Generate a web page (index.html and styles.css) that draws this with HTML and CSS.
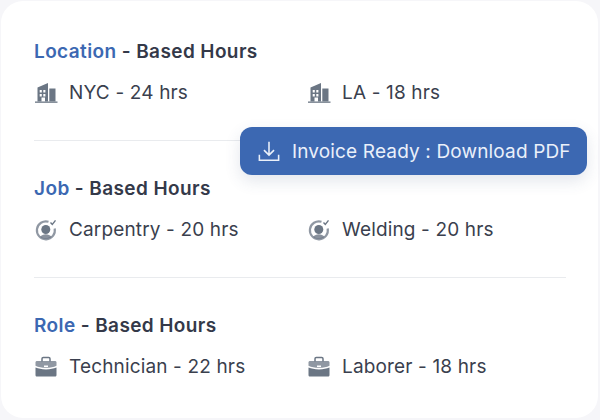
FILE: index.html
```html
<!DOCTYPE html>
<html lang="en">
<head>
    <meta charset="UTF-8">
    <meta name="viewport" content="width=device-width, initial-scale=1.0">
    <title>Based Hours</title>
    <link rel="stylesheet" href="styles.css">
</head>
<body>
    <svg class="icon-defs" width="0" height="0">
        <symbol id="building" viewBox="0 0 24 24">
            <path d="M3.500 20.500V6.500L14 2v18.500h-3v-4H7.500v4z M5.700 9v2.400h2.100V9z M9.300 9v2.400h2.100V9z M5.700 13v2.400h2.100V13z M9.300 13v2.400h2.100V13z" fill-rule="evenodd"/>
            <path d="M15.300 7.500h6.200v13h-6.200z"/>
            <path d="M1 20.500h22.500v1.300H1z"/>
        </symbol>
        <symbol id="target" viewBox="0 0 24 24">
            <path d="M14.500 3.700A9 9 0 1 0 20.700 10.500" fill="none" stroke="currentColor" stroke-width="2.200" opacity="0.75"/>
            <circle cx="11.800" cy="11.500" r="4.500"/>
            <path d="M6 19c1.500-2 3.500-2.800 5.800-2.800s4.300.8 5.800 2.800c-1.600 1.300-3.600 2-5.800 2s-4.200-.7-5.800-2z" opacity="0.8"/>
            <path d="M16.500 4.500l1.800 1.900 3.200-4" fill="none" stroke="currentColor" stroke-width="1.400"/>
        </symbol>
        <symbol id="briefcase" viewBox="0 0 24 24">
            <path d="M8 6.500V3.800C8 3 8.600 2.500 9.300 2.500h5.400c.7 0 1.300.5 1.300 1.300v2.700" fill="none" stroke="currentColor" stroke-width="1.500"/>
            <path d="M1.500 7.500C1.500 6.500 2.200 6 3 6h18c.8 0 1.500.5 1.500 1.500v3.300c-3 1.400-6 2-10.500 2s-7.500-.6-10.500-2z" opacity="0.75"/>
            <path d="M1.500 12.600c3 1.200 6 1.800 10.500 1.800s7.500-.6 10.500-1.800v7.400c0 1-.7 1.500-1.500 1.500H3c-.8 0-1.500-.5-1.500-1.500z"/>
            <path d="M10 10.500h4v1.500h-4z" fill="#fff"/>
        </symbol>
    </svg>

    <div class="card">
        <section class="group">
            <h2><span class="accent">Location</span> - Based Hours</h2>
            <div class="row">
                <div class="item"><svg class="icon"><use href="#building"/></svg>NYC - 24 hrs</div>
                <div class="item"><svg class="icon"><use href="#building"/></svg>LA - 18 hrs</div>
            </div>
        </section>
        <section class="group">
            <h2><span class="accent">Job</span> - Based Hours</h2>
            <div class="row">
                <div class="item"><svg class="icon"><use href="#target"/></svg>Carpentry - 20 hrs</div>
                <div class="item"><svg class="icon"><use href="#target"/></svg>Welding - 20 hrs</div>
            </div>
        </section>
        <section class="group">
            <h2><span class="accent">Role</span> - Based Hours</h2>
            <div class="row">
                <div class="item"><svg class="icon"><use href="#briefcase"/></svg>Technician - 22 hrs</div>
                <div class="item"><svg class="icon"><use href="#briefcase"/></svg>Laborer - 18 hrs</div>
            </div>
        </section>

        <div class="toast">
            <svg class="toast-icon" viewBox="0 0 24 24" fill="none" stroke="currentColor" stroke-width="1.700">
                <path d="M12 2v14.500M6.500 11l5.500 5.500 5.500-5.500M1.500 16v6h21v-6"/>
            </svg>
            Invoice Ready : Download PDF
        </div>
    </div>
</body>
</html>
```

FILE: styles.css
```css
body {
    margin: 0;
    width: 600px;
    height: 420px;
    overflow: hidden;
    background: #f6f6f9;
    font-family: 'Inter', sans-serif;
}

.icon-defs {
    position: absolute;
}

.card {
    position: relative;
    box-sizing: border-box;
    width: 597px;
    height: 417px;
    margin: 1px 0 0 1px;
    padding: 39px 32px 0 33px;
    background: #fff;
    border-radius: 22px;
}

.group {
    height: 100px;
    margin-bottom: 36px;
    border-bottom: 1px solid #e9ebee;
}

.group:last-of-type {
    border-bottom: none;
}

.group h2 {
    margin: 0 0 17px;
    font-size: 19px;
    line-height: 24px;
    font-weight: 600;
    letter-spacing: 0.4px;
    color: #343949;
}

.accent {
    color: #3c68b2;
}

.row {
    display: flex;
}

.item {
    display: flex;
    flex: none;
    align-items: center;
    width: 273px;
    font-size: 19px;
    line-height: 24px;
    letter-spacing: 0.15px;
    color: #3a3f4e;
}

.icon {
    width: 24px;
    height: 24px;
    margin-right: 11px;
    fill: #6b7684;
    color: #6b7684;
}

.toast {
    position: absolute;
    left: 239px;
    top: 126px;
    display: flex;
    align-items: center;
    box-sizing: border-box;
    width: 347px;
    height: 48px;
    padding-left: 18px;
    background: #3c68b2;
    border-radius: 12px;
    box-shadow: 0 6px 16px rgba(60, 80, 120, 0.14);
    font-size: 19px;
    letter-spacing: 0.15px;
    color: #eaf0fa;
}

.toast-icon {
    width: 22px;
    height: 22px;
    margin-right: 12px;
}
```
